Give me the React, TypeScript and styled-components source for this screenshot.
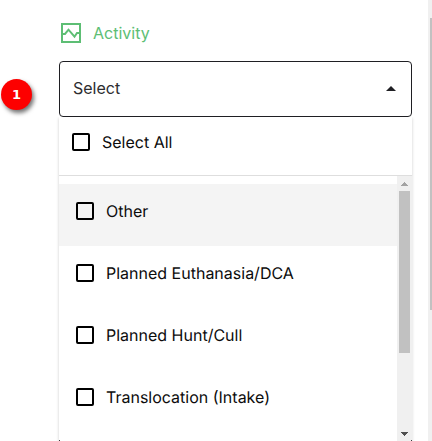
import React from "react";
import styled, { createGlobalStyle } from "styled-components";

const GlobalStyle = createGlobalStyle`
  *, *::before, *::after { box-sizing: border-box; }
  body { margin: 0; background: #fff; overflow: hidden; }
`;

const Page = styled.div`
  position: relative;
  display: flex;
  width: 432px;
  height: 441px;
  overflow: hidden;
  background: #fff;
  color: #0c0c0c;
  font: 400 16px/24px Inter, sans-serif;
`;

const Content = styled.main`
  flex: 1;
  min-width: 0;
  display: flex;
  flex-direction: column;
  padding: 21px 16px 0 59px;
`;

const Label = styled.div`
  display: flex;
  align-items: center;
  gap: 12px;
  height: 24px;
  margin: 0 0 16px 2px;
  color: #5dbe74;
`;

const SelectBox = styled.div`
  display: flex;
  align-items: center;
  justify-content: space-between;
  flex: none;
  height: 56px;
  padding: 0 15px 2px 13px;
  border: 1px solid #1f1f23;
  border-radius: 4px;
  color: #2d2d30;
`;

const Menu = styled.div`
  position: relative;
  flex: 1;
  min-height: 0;
  display: flex;
  flex-direction: column;
  box-shadow: 0 1px 3px rgba(0, 0, 0, 0.2);
  clip-path: inset(0 -4px 0 -4px);

  /* edges of the field that lies under the open menu */
  &::after {
    content: "";
    position: absolute;
    inset: auto 0 0;
    height: 1px;
    border: solid #3a3a3d;
    border-width: 0 1px;
  }
`;

const Option = styled.label<{ $kind?: "all" | "active" }>`
  display: flex;
  align-items: center;
  gap: 12px;
  flex: none;
  height: ${(p) => (p.$kind === "all" ? "59px" : "62px")};
  padding: ${(p) => (p.$kind === "all" ? "0 13px 8px" : "0 17px 8px")};
  background: ${(p) => (p.$kind === "active" ? "#f4f4f4" : "#fff")};
  border-bottom: ${(p) => (p.$kind === "all" ? "1px solid #dedede" : "0")};
  text-rendering: geometricPrecision;
`;

const Checkbox = styled.span`
  flex: none;
  width: 18px;
  height: 18px;
  border: 2px solid #000;
  border-radius: 2px;
`;

const ScrollArea = styled.div`
  flex: 1;
  min-height: 0;
  display: flex;
`;

const Options = styled.div`
  flex: 1;
  padding-top: 8px;
  overflow: hidden;
`;

const ScrollTrack = styled.div`
  display: flex;
  flex-direction: column;
  flex: none;
  width: 16px;
  margin-right: -1px;
  padding: 6px 3px 5px 2px;
  background: #f0f0f0;
`;

const ScrollThumb = styled.div`
  height: 162px;
  margin: 5px 0 auto;
  background: #c1c1c1;
`;

const Arrow = styled.svg`
  display: block;
  flex: none;
  align-self: center;
`;

const PageTrack = styled.div`
  flex: none;
  width: 4px;
  padding: 18px 0 0 2px;
  background: #f0f0f0;
`;

const PageThumb = styled.div`
  height: 292px;
  background: #c1c1c1;
`;

const Badge = styled.div`
  position: absolute;
  left: 1px;
  top: 79px;
  width: 31px;
  height: 31px;
  border-radius: 50%;
  background: #fd0000;
  box-shadow: 2px 3px 4px rgba(0, 0, 0, 0.55);
  color: #fff;
  font: 700 13px/31px "DejaVu Sans", sans-serif;
  text-align: center;
`;

const activities = ["Other", "Planned Euthanasia/DCA", "Planned Hunt/Cull", "Translocation (Intake)"];

export default function App() {
  return (
    <Page>
      <GlobalStyle />
      <Content>
        <Label>
          <svg width="20" height="20" viewBox="0 0 20 20" fill="none" stroke="currentColor" strokeWidth="2">
            <path d="M1 1h18v18H1zM1 11h3l3.5-4.3 6 7L16 10h3" />
          </svg>
          Activity
        </Label>
        <SelectBox>
          Select
          <Arrow width="10" height="5" viewBox="0 0 10 5">
            <path d="M0 5 5 0l5 5z" fill="#1f1f23" />
          </Arrow>
        </SelectBox>
        <Menu>
          <Option $kind="all">
            <Checkbox />
            Select All
          </Option>
          <ScrollArea>
            <Options>
              {activities.map((name, i) => (
                <Option key={name} $kind={i === 0 ? "active" : undefined}>
                  <Checkbox />
                  {name}
                </Option>
              ))}
            </Options>
            <ScrollTrack>
              <Arrow width="7" height="4" viewBox="0 0 7 4" shapeRendering="crispEdges">
                <path d="M0 4V3h1V2h1V1h1V0h1v1h1v1h1v1h1v1z" fill="#a3a3a3" />
              </Arrow>
              <ScrollThumb />
              <Arrow width="7" height="4" viewBox="0 0 7 4" shapeRendering="crispEdges">
                <path d="M0 0v1h1v1h1v1h1v1h1V3h1V2h1V1h1V0z" fill="#505050" />
              </Arrow>
            </ScrollTrack>
          </ScrollArea>
        </Menu>
      </Content>
      <PageTrack>
        <PageThumb />
      </PageTrack>
      <Badge>1</Badge>
    </Page>
  );
}
